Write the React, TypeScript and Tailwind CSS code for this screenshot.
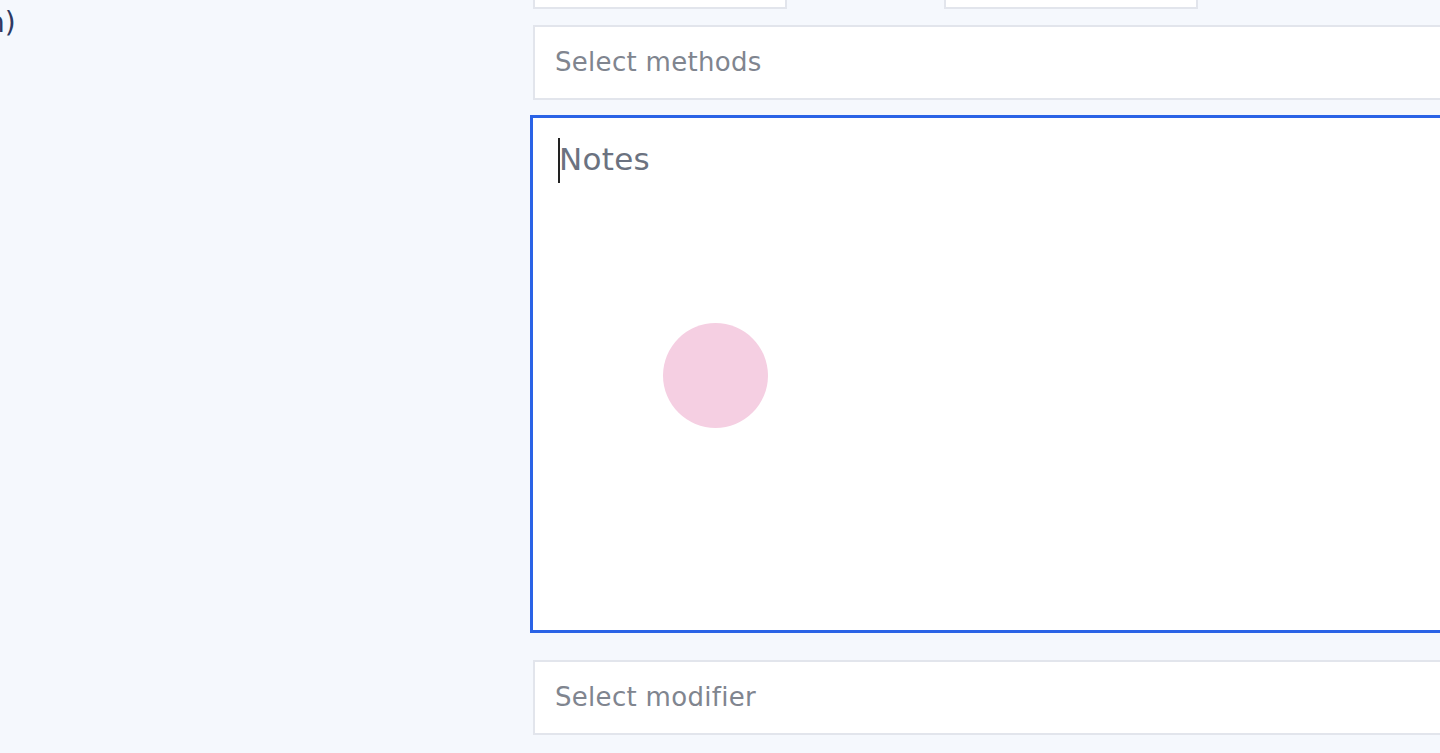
import React from "react";

const font = { fontFamily: '"DejaVu Sans", "Open Sans", sans-serif' };

function SelectBox({ label }: { label: string }) {
  return (
    <div className="h-[75px] w-full bg-white border-2 border-[#e2e5ec] flex items-center pl-5">
      <span className="text-[26px] text-[#80858f] tracking-[0.3px]">{label}</span>
    </div>
  );
}

export default function App() {
  return (
    <div
      className="relative w-[1440px] h-[753px] overflow-hidden bg-[#f5f8fd]"
      style={font}
    >
      <div className="flex">
        {/* left column: tail of a label */}
        <div className="w-[531px] shrink-0 pt-[5px]">
          <span className="block ml-[-13px] text-[28px] text-[#2e3a63] leading-[36px]">
            n)
          </span>
        </div>

        {/* right column: form fields */}
        <div className="w-[1100px] shrink-0 flex flex-col mt-[-66px] pl-[2px]">
          <div className="flex gap-[157px]">
            <div className="h-[75px] w-[254px] bg-white border-2 border-[#e2e5ec]" />
            <div className="h-[75px] w-[254px] bg-white border-2 border-[#e2e5ec]" />
          </div>

          <div className="mt-[16px]">
            <SelectBox label="Select methods" />
          </div>

          <div className="mt-[15px] ml-[-3px] h-[518px] bg-white border-[3px] border-[#2a63e6] pt-[19px] pl-[25px]">
            <div className="flex items-start">
              <div className="w-[2px] h-[45px] bg-[#222] mt-[1px]" />
              <span className="text-[31px] text-[#6b7280] leading-[44px] ml-[-1px] tracking-[0.3px]">Notes</span>
            </div>
          </div>

          <div className="mt-[27px]">
            <SelectBox label="Select modifier" />
          </div>
        </div>
      </div>

      {/* touch indicator */}
      <div className="absolute left-[663px] top-[323px] w-[105px] h-[105px] rounded-full bg-[#f5cfe2]" />
    </div>
  );
}
